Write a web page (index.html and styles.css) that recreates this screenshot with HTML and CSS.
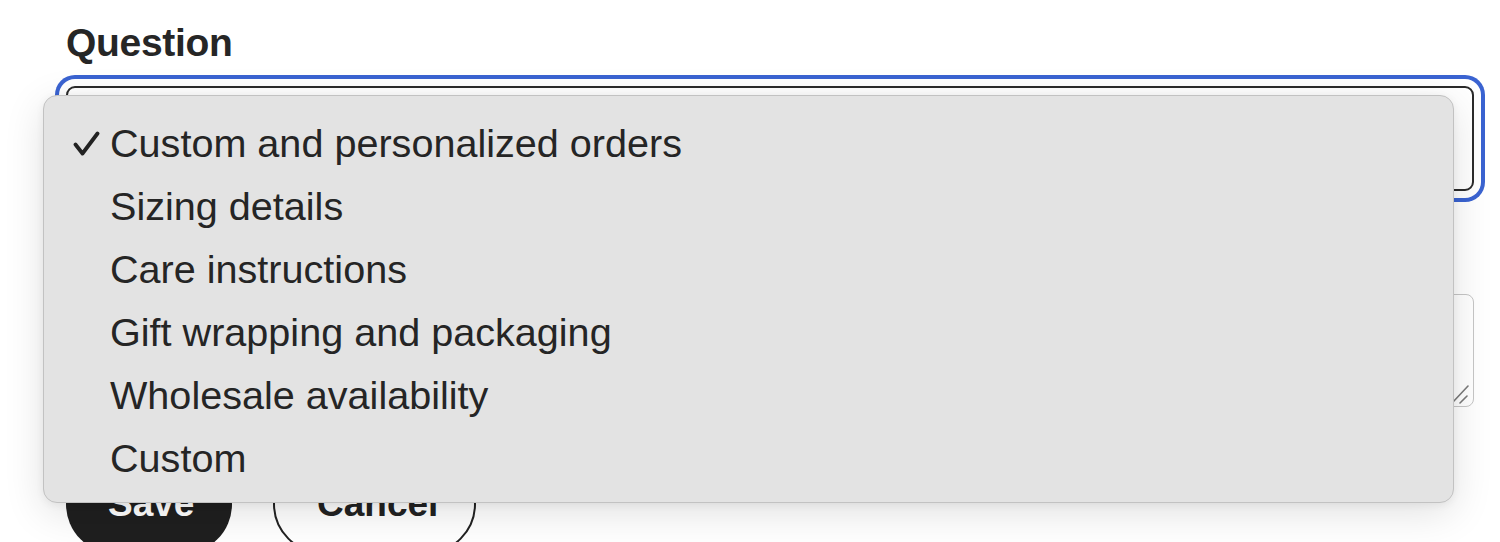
FILE: index.html
```html
<!DOCTYPE html>
<html lang="en">
<head>
<meta charset="utf-8">
<title>Question</title>
<link rel="stylesheet" href="styles.css">
</head>
<body>
<div class="form">
  <div class="label">Question</div>
  <div class="select-box"></div>
  <div class="textarea-box">
    <svg class="resize" width="18" height="20" viewBox="0 0 18 20"><path d="M1 18 L16 2 M8 19 L15 12" stroke="#7a7a7a" stroke-width="1.6" fill="none" stroke-linecap="round"/></svg>
  </div>
  <div class="buttons">
    <button class="btn btn-primary">Save</button>
    <button class="btn btn-secondary">Cancel</button>
  </div>
</div>
<div class="menu">
  <div class="item"><svg class="check" width="27" height="25" viewBox="0 0 27 25"><path d="M2.5 13.5 L9.5 22.5 L24.5 2.5" stroke="#222" stroke-width="3.8" fill="none" stroke-linecap="round" stroke-linejoin="round"/></svg><span>Custom and personalized orders</span></div>
  <div class="item"><span class="blank"></span><span>Sizing details</span></div>
  <div class="item"><span class="blank"></span><span>Care instructions</span></div>
  <div class="item"><span class="blank"></span><span>Gift wrapping and packaging</span></div>
  <div class="item"><span class="blank"></span><span>Wholesale availability</span></div>
  <div class="item"><span class="blank"></span><span>Custom</span></div>
</div>
</body>
</html>
```
FILE: styles.css
```css
html, body {
  margin: 0;
  padding: 0;
  background: #ffffff;
  height: 542px;
  overflow: hidden;
}
body {
  font-family: "Liberation Sans", Arial, sans-serif;
  color: #222222;
  position: relative;
}
.form {
  display: flex;
  flex-direction: column;
  padding: 20px 26px 0 66px;
}
.label {
  font-size: 39px;
  line-height: 46px;
  font-weight: 700;
  color: #262626;
  letter-spacing: -0.3px;
}
.select-box {
  margin-top: 20px;
  height: 105px;
  box-sizing: border-box;
  border: 2px solid #2b2b2b;
  border-radius: 9px;
  background: #ffffff;
  box-shadow: 0 0 0 7px #ffffff, 0 0 0 11px #3a63d1;
}
.textarea-box {
  position: relative;
  margin-top: 103px;
  height: 113px;
  box-sizing: border-box;
  border: 1.5px solid #c6c6c6;
  border-radius: 8px;
  background: #ffffff;
}
.resize {
  position: absolute;
  right: 3px;
  bottom: 2px;
}
.buttons {
  display: flex;
  gap: 41px;
  margin-top: 47px;
}
.btn {
  height: 100px;
  border-radius: 50px;
  font-family: "Liberation Sans", Arial, sans-serif;
  font-size: 37px;
  font-weight: 700;
  padding: 0 42px;
  box-sizing: border-box;
}
.btn-primary {
  background: #1f1f1f;
  color: #ffffff;
  border: none;
  width: 166px;
}
.btn-secondary {
  background: #ffffff;
  color: #222222;
  border: 2px solid #222222;
  width: 203px;
}
.menu {
  position: absolute;
  left: 43px;
  top: 95px;
  width: 1411px;
  height: 408px;
  box-sizing: border-box;
  padding: 16px 0 12px 29px;
  background: #e3e3e3;
  border: 1px solid #c2c2c2;
  border-radius: 14px;
  box-shadow: 0 10px 40px rgba(0, 0, 0, 0.12), 0 2px 8px rgba(0, 0, 0, 0.06);
}
.item {
  display: grid;
  grid-template-columns: 37px 1fr;
  align-items: center;
  height: 63px;
  font-size: 39.6px;
  line-height: 63px;
  color: #252525;
}
.check {
  display: block;
  margin-top: -1px;
}
```
